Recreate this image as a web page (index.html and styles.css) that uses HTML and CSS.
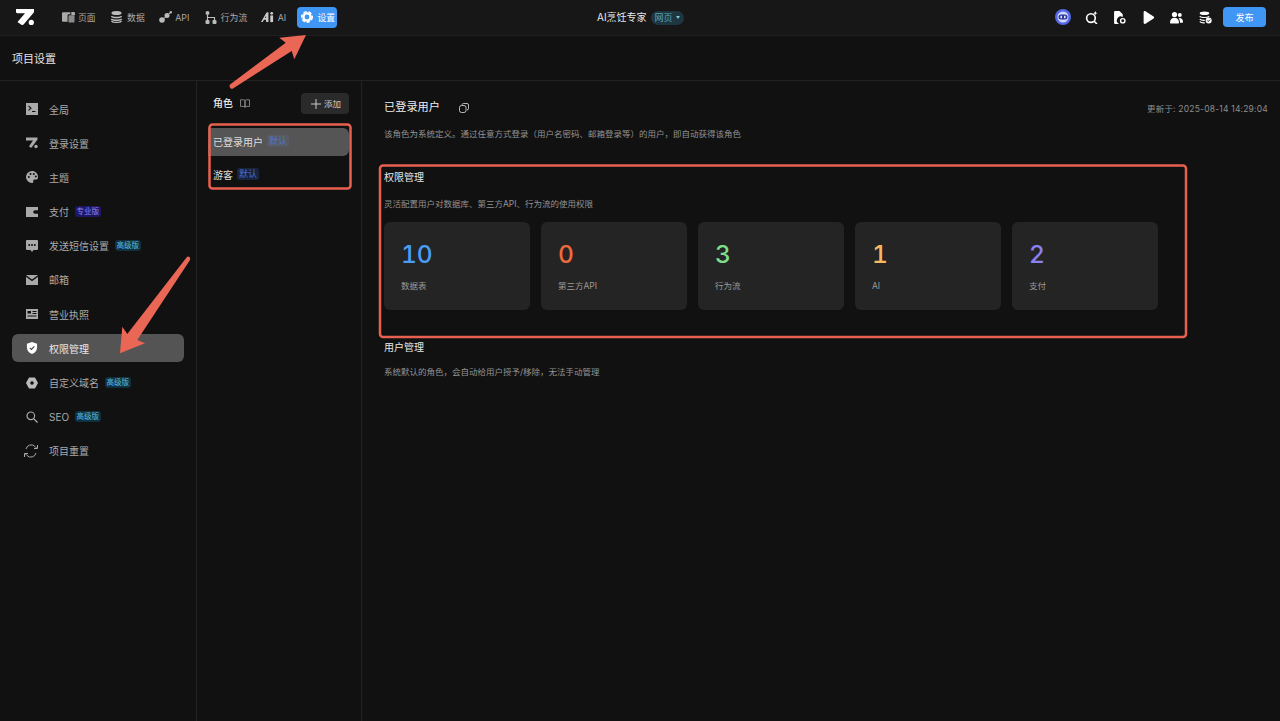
FILE: index.html
```html
<!DOCTYPE html>
<html lang="zh">
<head>
<meta charset="utf-8">
<title>项目设置</title>
<link rel="stylesheet" href="styles.css">
</head>
<body>
<div class="app">
  <header class="topbar">
    <svg class="logo" viewBox="0 0 18 16"><path d="M0 0h18v3.2L8 15a2.2 2.2 0 0 1-3 .4L1.500 13 9 4.200H1.500A1.500 1.500 0 0 1 0 2.700Z" fill="#fff"/><circle cx="15.300" cy="13.400" r="2.600" fill="#fff"/></svg>
    <nav class="topnav">
      <a class="tn"><svg class="ti" viewBox="0 0 14 12"><path d="M0 2a1 1 0 0 1 1-1h8v2H7a1 1 0 0 0-1 1v7H1a1 1 0 0 1-1-1Z" fill="#aaa"/><path d="M10 0.500h3a1 1 0 0 1 1 1V4h-4Z" fill="#aaa"/><rect x="7" y="4" width="6.500" height="8" rx="1" fill="#8a8a8a"/></svg><span>页面</span></a>
      <a class="tn tn-data"><svg class="ti" viewBox="0 0 14 13"><ellipse cx="7" cy="2.200" rx="5.500" ry="2.200" fill="#bbb"/><path d="M1.500 5.500c1 2 10 2 11 0M1.500 8.500c1 2 10 2 11 0" fill="none" stroke="#bbb" stroke-width="1.500"/><path d="M1.500 10.500c1 2.400 10 2.400 11 0" fill="none" stroke="#bbb" stroke-width="1.500"/></svg><span>数据</span></a>
      <a class="tn tn-api"><svg class="ti" viewBox="0 0 13 12"><circle cx="3" cy="9" r="2.800" fill="#bbb"/><circle cx="8" cy="4.500" r="2.500" fill="#bbb"/><circle cx="11.800" cy="1.300" r="1.200" fill="#bbb"/><path d="M3 9l8.800-7.700" stroke="#bbb"/></svg><span>API</span></a>
      <a class="tn tn-flow"><svg class="ti ti-flow" viewBox="0 0 12 13"><circle cx="2.500" cy="2" r="2" fill="#bbb"/><rect x="0.500" y="9" width="4" height="4" rx="1" fill="#bbb"/><rect x="7.500" y="9" width="4" height="4" rx="1" fill="#bbb"/><path d="M2.500 4v5M2.500 6.500h7V9" fill="none" stroke="#bbb" stroke-width="1.200"/></svg><span>行为流</span></a>
      <a class="tn tn-ai"><svg class="ti" viewBox="0 0 14 11"><path d="M0 11 5.500 1.500C6 .6 6.500 .5 7.500 .5H8V11H5.500V8.500H3.200L1.800 11Zm4.200-4.300h1.300V4.300Z" fill="#ccc" fill-rule="evenodd"/><rect x="10" y="3.800" width="3" height="7.200" fill="#ccc"/><circle cx="11.500" cy="1.500" r="1.500" fill="#ccc"/></svg><span>AI</span></a>
      <a class="tn tn-on"><svg class="ti ti-gear" viewBox="0 0 12 12"><circle cx="6" cy="6" r="3.600" fill="none" stroke="#fff" stroke-width="2.400"/><circle cx="6" cy="6" r="5.200" fill="none" stroke="#fff" stroke-width="1.600" stroke-dasharray="3.200 1.880"/></svg><span>设置</span></a>
    </nav>
    <div class="proj">
      <span class="proj-name">AI烹饪专家</span>
      <span class="proj-tag">网页<i class="caret"></i></span>
    </div>
    <div class="tools">
      <svg class="tool tool-bot" viewBox="0 0 16 16"><circle cx="8" cy="8" r="8" fill="#5468e8"/><circle cx="8" cy="8" r="5.500" fill="#cfd6ff"/><rect x="3.500" y="5.500" width="9" height="5" rx="2.500" fill="#2b3a9c"/><rect x="5.500" y="6.800" width="1.400" height="2.400" fill="#fff"/><rect x="9.100" y="6.800" width="1.400" height="2.400" fill="#fff"/></svg>
      <svg class="tool" viewBox="0 0 12 12"><circle cx="5.500" cy="6.500" r="4" fill="none" stroke="#fff" stroke-width="1.500"/><path d="M8.500 9.500 11 12" stroke="#fff" stroke-width="1.500"/><path d="M9.500 0l.6 1.400L11.500 2l-1.400.6-.6 1.400-.6-1.400L7.500 2l1.400-.6Z" fill="#fff"/></svg>
      <svg class="tool" viewBox="0 0 12 12"><path d="M1 1a1 1 0 0 1 1-1h4l3 3v2.500a3.500 3.500 0 0 0-3.500 6.500H2a1 1 0 0 1-1-1Z" fill="#fff"/><circle cx="9" cy="9" r="2" fill="none" stroke="#fff" stroke-width="1.300"/></svg>
      <svg class="tool" viewBox="0 0 12 12"><path d="M1.500 1.200c0-.9 1-1.400 1.700-.9l7.500 4.800c.7.400.7 1.400 0 1.800l-7.500 4.800c-.7.500-1.700 0-1.700-.9Z" fill="#fff"/></svg>
      <svg class="tool" viewBox="0 0 13 12"><circle cx="4.500" cy="3" r="2.600" fill="#fff"/><path d="M0 11c0-3 2-4.800 4.500-4.800S9 8 9 11c0 .6-.4 1-1 1H1c-.6 0-1-.4-1-1Z" fill="#fff"/><circle cx="9.800" cy="3.500" r="2" fill="#fff"/><path d="M10 6.500c1.800.2 3 1.800 3 3.800 0 .6-.4 1-1 1h-2c0-1.800-.5-3.500-1.500-4.500Z" fill="#fff"/></svg>
      <svg class="tool" viewBox="0 0 13 12"><ellipse cx="5.500" cy="1.800" rx="4.800" ry="1.800" fill="#fff"/><path d="M.8 4.800c1 1.600 8 1.600 9.400 0M.8 7.500c.8 1.300 3.500 1.500 5 1.400M.8 10c.8 1.300 3.500 1.500 5 1.400" fill="none" stroke="#fff" stroke-width="1.200"/><circle cx="9.700" cy="9" r="3" fill="#fff"/><path d="M8.300 9l1 1 1.700-1.800" fill="none" stroke="#222" stroke-width="1"/></svg>
      <button class="publish">发布</button>
    </div>
  </header>

  <div class="subhead">项目设置</div>

  <div class="body">
    <aside class="side">
      <a class="si"><svg class="sic" viewBox="0 0 12 12"><path d="M0 0h12v12H0Z" fill="#aaa"/><path d="M2.500 3l2.500 2.200-2.500 2.200M6 8.500h3.500" fill="none" stroke="#111" stroke-width="1.100"/></svg><span>全局</span></a>
      <a class="si"><svg class="sic" viewBox="0 0 12 11"><path d="M0 0h11.500v2L6 9.500c-.5.700-1 .8-1.500.4L3 8.700 7 3H0Z" fill="#aaa"/><circle cx="10" cy="9" r="1.700" fill="#aaa"/></svg><span>登录设置</span></a>
      <a class="si"><svg class="sic" viewBox="0 0 12 12"><path d="M6 0a6 6 0 0 0 0 12c1.300 0 1.600-.8 1.300-1.500-.4-1 .2-1.900 1.300-1.900H10c1.300 0 2-1 2-2.600C12 2.500 9.300 0 6 0Z" fill="#aaa"/><circle cx="2.800" cy="6" r="1" fill="#111"/><circle cx="4.500" cy="3" r="1" fill="#111"/><circle cx="7.800" cy="3" r="1" fill="#111"/><circle cx="9.800" cy="5.500" r="1" fill="#111"/></svg><span>主题</span></a>
      <a class="si"><svg class="sic" viewBox="0 0 12 10"><path d="M0 0h12v3.200H9a1.800 1.800 0 0 0 0 3.600h3V10H0Z" fill="#aaa"/></svg><span>支付</span><em class="badge b-pro">专业版</em></a>
      <a class="si"><svg class="sic" viewBox="0 0 12 12"><path d="M1 0h10a1 1 0 0 1 1 1v8a1 1 0 0 1-1 1H7.500L6 12 4.500 10H1a1 1 0 0 1-1-1V1a1 1 0 0 1 1-1Z" fill="#aaa"/><circle cx="3.200" cy="5" r="1" fill="#111"/><circle cx="6" cy="5" r="1" fill="#111"/><circle cx="8.800" cy="5" r="1" fill="#111"/></svg><span>发送短信设置</span><em class="badge b-adv">高级版</em></a>
      <a class="si"><svg class="sic" viewBox="0 0 12 10"><path d="M0 0h12L6 4.500ZM0 1.800l6 4.500 6-4.500V10H0Z" fill="#aaa"/></svg><span>邮箱</span></a>
      <a class="si"><svg class="sic" viewBox="0 0 12 10"><path d="M0 0h12v10H0Z" fill="#aaa"/><path d="M1.500 2h3.500v2.500H1.500Z" fill="#111"/><path d="M6.500 2.500h4M6.500 4.500h4M1.500 7h9" stroke="#111" stroke-width="1"/></svg><span>营业执照</span></a>
      <a class="si si-on"><svg class="sic" viewBox="0 0 12 13"><path d="M6 0l5.500 1.800V6c0 3.300-2.300 5.800-5.500 7C2.800 11.800.5 9.300.5 6V1.800Z" fill="#fff"/><path d="M3.600 6.300 5.400 8l3.100-3.200" fill="none" stroke="#444" stroke-width="1.200"/></svg><span>权限管理</span></a>
      <a class="si"><svg class="sic" viewBox="0 0 12 11"><path d="M3 0h6l3 5.500L9 11H3L0 5.500Z" fill="#bbb"/><circle cx="6" cy="5.500" r="1.800" fill="#111"/></svg><span>自定义域名</span><em class="badge b-adv">高级版</em></a>
      <a class="si"><svg class="sic" viewBox="0 0 12 12"><circle cx="4.800" cy="4.800" r="3.800" fill="none" stroke="#aaa" stroke-width="1.200"/><path d="M7.600 7.600 11.500 11.500" stroke="#aaa" stroke-width="1.300"/></svg><span>SEO</span><em class="badge b-adv">高级版</em></a>
      <a class="si"><svg class="sic sic-big" viewBox="0 0 14 14"><path d="M2 5a5.300 5.300 0 0 1 9-2.500L12.500 4M12 9a5.300 5.300 0 0 1-9 2.500L1.500 10" fill="none" stroke="#aaa" stroke-width="1"/><path d="M13.500 1v3.500H10M.5 13V9.500H4" fill="none" stroke="#aaa" stroke-width="1"/></svg><span>项目重置</span></a>
    </aside>

    <section class="roles">
      <div class="roles-head">
        <span class="roles-title">角色</span>
        <svg class="book" viewBox="0 0 10 9"><path d="M.5.800h3.300c.7 0 1.200.4 1.200 1v6.500c0-.6-.5-.9-1.200-.9H.5ZM9.500.800H6.200c-.7 0-1.200.4-1.200 1v6.500c0-.6.500-.9 1.200-.9h3.300Z" fill="none" stroke="#999" stroke-width=".8"/></svg>
        <button class="add"><svg class="plus" viewBox="0 0 10 10"><path d="M5 0v10M0 5h10" stroke="#ccc" stroke-width="1"/></svg><span class="add-text">添加</span></button>
      </div>
      <div class="role role-on"><span>已登录用户</span><em class="tag tag-on">默认</em></div>
      <div class="role"><span>游客</span><em class="tag">默认</em></div>
    </section>

    <main class="main">
      <div class="main-head">
        <h1>已登录用户</h1>
        <svg class="copy" viewBox="0 0 10 10"><rect x=".5" y="2.500" width="6.500" height="7" rx="2" fill="none" stroke="#ccc" stroke-width=".9"/><path d="M3 1.800A1.500 1.500 0 0 1 4.500.5H8A1.500 1.500 0 0 1 9.500 2v3.500A1.500 1.500 0 0 1 8 7" fill="none" stroke="#ccc" stroke-width=".9"/></svg>
        <span class="updated">更新于: 2025-08-14 14:29:04</span>
      </div>
      <p class="desc d-first">该角色为系统定义。通过任意方式登录（用户名密码、邮箱登录等）的用户，即自动获得该角色</p>
      <h2 class="sec s-perm">权限管理</h2>
      <p class="desc d-perm">灵活配置用户对数据库、第三方API、行为流的使用权限</p>
      <div class="cards">
        <div class="card"><b class="num c-blue">10</b><span class="lab">数据表</span></div>
        <div class="card"><b class="num c-orange">0</b><span class="lab">第三方API</span></div>
        <div class="card"><b class="num c-green">3</b><span class="lab">行为流</span></div>
        <div class="card"><b class="num c-yellow">1</b><span class="lab">AI</span></div>
        <div class="card"><b class="num c-purple">2</b><span class="lab">支付</span></div>
      </div>
      <h2 class="sec s-user">用户管理</h2>
      <p class="desc d-user">系统默认的角色，会自动给用户授予/移除，无法手动管理</p>
    </main>
  </div>

  <svg class="marks" viewBox="0 0 1280 721">
    <rect x="209.500" y="124.500" width="141" height="64" rx="3" class="box"/>
    <rect x="380" y="165.500" width="806" height="171.500" rx="3" class="box"/>
    <path class="arrow" d="M230 84.500 285.700 42.700 279.300 37.700 306 35 294.300 59.300 291.700 51 233 88.500C231 90 228.500 86.500 230 84.500Z"/>
    <path class="arrow" d="M186.500 257.500 127.300 334 122.300 326.700 120 353.300 145 343.300 137.300 340 190 260C191 257 188 255.500 186.500 257.500Z"/>
  </svg>
</div>
</body>
</html>
```

FILE: styles.css
```css
* { box-sizing: border-box; }
html, body { margin: 0; height: 100%; }
body {
  background: #111;
  color: #ddd;
  font-family: Inter, "Noto Sans CJK SC", sans-serif;
  font-size: 10px;
  overflow: hidden;
}
.app { position: relative; width: 1280px; height: 721px; display: flex; flex-direction: column; }
em { font-style: normal; }

/* top bar */
.topbar {
  height: 36px;
  flex: none;
  background: #171717;
  border-bottom: 1px solid #1f1f1f;
  display: flex;
  align-items: center;
  padding: 0 14px 1px 15.500px;
  position: relative;
}
.logo { width: 18px; height: 16px; flex: none; }
.topnav { display: flex; align-items: center; margin-left: 28.500px; }
.tn { display: flex; align-items: center; gap: 3px; color: #aaa; font-size: 8.800px; margin-right: 14.500px; white-space: nowrap; }
.ti { width: 13px; height: 12px; flex: none; }
.ti-flow { width: 12px; height: 13px; margin-right: 1px; }
.tn-data { gap: 4px; }
.tn-api { margin-right: 15.500px; }
.tn-flow { margin-right: 13.500px; }
.tn-ai { gap: 4px; margin-right: 11.300px; }
.tn-on {
  background: #4096f5;
  color: #fff;
  height: 21px;
  width: 40px;
  border-radius: 4px;
  padding-left: 4px;
  gap: 4px;
  margin-right: 0;
}
.ti-gear { width: 12px; height: 12px; }
.proj { position: absolute; left: 597px; top: 10px; display: flex; align-items: center; gap: 4px; }
.proj-name { color: #e8e8e8; font-size: 10px; font-weight: 400; line-height: 15px; }
.proj-tag {
  background: #1e3640;
  color: #5aa3b8;
  font-size: 9px;
  height: 14px;
  width: 33px;
  padding-left: 4px;
  border-radius: 7px;
  display: flex;
  align-items: center;
  gap: 3px;
}
.caret { width: 0; height: 0; border: 2.500px solid transparent; border-top: 3px solid #7cc; border-bottom: 0; }
.tools { margin-left: auto; display: flex; align-items: center; }
.tool { width: 13px; height: 13px; margin-right: 15.500px; flex: none; }
.tool-bot { width: 16px; height: 16px; margin-right: 13.500px; }
.tool:nth-last-of-type(1) { margin-right: 11.500px; }
.publish {
  border: 0;
  background: #4096f5;
  color: #fff;
  width: 43px;
  height: 20px;
  border-radius: 4px;
  font: 400 9px Inter, "Noto Sans CJK SC", sans-serif;
}

/* sub header */
.subhead {
  height: 45px;
  flex: none;
  border-bottom: 1px solid #222;
  padding-left: 12px;
  display: flex;
  align-items: center;
  font-size: 11px;
  font-weight: 400;
  color: #e4e4e4;
}

.body { flex: 1; display: flex; min-height: 0; }

/* sidebar */
.side {
  width: 197px;
  flex: none;
  border-right: 1px solid #222;
  padding: 14px 12px 0;
  display: flex;
  flex-direction: column;
  gap: 6.200px;
}
.si { height: 28px; display: flex; align-items: center; padding-left: 14px; color: #aaa; font-size: 10px; border-radius: 6px; white-space: nowrap; }
.si span { margin-left: 11px; }
.sic { width: 12px; height: 12px; flex: none; }
.sic-big { width: 14px; height: 14px; margin-left: -2px; }
.si-on { background: #545454; color: #e8e8e8; }
.badge {
  font-size: 7.500px;
  font-weight: 400;
  height: 11px;
  line-height: 11px;
  padding: 0 2px;
  border-radius: 3px;
  margin-left: 5.500px;
}
.b-pro { background: #1e1766; color: #8d84f0; }
.b-adv { background: #10303f; color: #57bfe6; }

/* roles */
.roles { width: 165px; flex: none; border-right: 1px solid #222; padding: 12px 12px 0 12px; }
.roles-head { display: flex; align-items: center; height: 21px; padding-left: 4px; margin-bottom: 14px; }
.roles-title { font-size: 10px; font-weight: 500; color: #e8e8e8; margin-bottom: 3px; }
.book { width: 10px; height: 9px; margin-left: 7px; }
.add {
  margin-left: auto;
  width: 48px;
  height: 21px;
  background: #2a2a2a;
  border: 0;
  border-radius: 4px;
  color: #ccc;
  font: 400 8.500px Inter, "Noto Sans CJK SC", sans-serif;
  display: flex;
  align-items: center;
  justify-content: center;
  gap: 3px;
  padding: 0 0 0 2px;
}
.add-text { margin-bottom: 2px; }
.plus { width: 10px; height: 10px; }
.role { height: 28px; display: flex; align-items: center; padding: 0 0 2px 5px; color: #ddd; font-size: 10px; margin-bottom: 5px; margin-left: -1px; border-radius: 0 6px 6px 0; }
.role-on { background: #555; }
.tag { font-size: 9px; color: #4a6fd0; background: #18233d; height: 12px; line-height: 12px; padding: 0 2px; margin-left: 4px; border-radius: 2px; }
.tag-on { background: #585b62; color: #4f74cc; }

/* main */
.main { flex: 1; padding: 0 12px 0 22px; min-width: 0; }
.main-head { display: flex; align-items: center; height: 17px; margin-top: 18px; }
h1 { margin: 0; font-size: 11.200px; font-weight: 400; color: #eee; line-height: 17px; }
.copy { width: 10px; height: 10px; margin-left: 19px; }
.updated { margin-left: auto; color: #8e8e8e; font-size: 8.500px; letter-spacing: .2px; }
.desc { margin: 0; color: #939393; font-size: 8.500px; line-height: 13px; }
.d-first { margin-top: 12px; }
.sec { margin: 0; font-size: 10px; font-weight: 400; color: #e8e8e8; line-height: 14px; }
.s-perm { margin-top: 29px; }
.d-perm { margin-top: 14px; }
.cards { display: flex; gap: 11px; margin-top: 11px; }
.card { width: 146px; height: 88px; background: #242424; border-radius: 6px; padding: 18px 0 0 17px; display: flex; flex-direction: column; }
.num { font-size: 24.500px; font-weight: 500; line-height: 29px; font-variant-numeric: tabular-nums; }
.lab { margin-top: 11px; font-size: 8.500px; color: #9a9a9a; line-height: 13px; }
.c-blue { color: #4a9df5; }
.c-orange { color: #f06a3c; }
.c-green { color: #7fdc8c; }
.c-yellow { color: #f5b95f; }
.c-purple { color: #8b80f0; }
.s-user { margin-top: 30px; }
.d-user { margin-top: 12px; }

/* annotations */
.marks { position: absolute; inset: 0; width: 1280px; height: 721px; pointer-events: none; }
.box { fill: none; stroke: #e8604f; stroke-width: 2.500; }
.arrow { fill: #ea6655; }
```
